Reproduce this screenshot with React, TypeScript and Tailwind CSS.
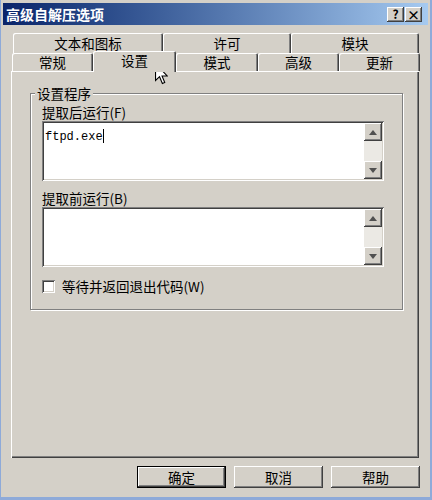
import React from "react";

const raised =
  "bg-[#d4d0c8] shadow-[inset_-1px_-1px_#404040,inset_1px_1px_#ffffff,inset_-2px_-2px_#808080,inset_2px_2px_#d4d0c8]";
const sunken =
  "shadow-[inset_1px_1px_#808080,inset_-1px_-1px_#ffffff,inset_2px_2px_#404040,inset_-2px_-2px_#d4d0c8]";

type Tab = { label: string; width: number; active?: boolean };

const backRow: Tab[] = [
  { label: "文本和图标", width: 150 },
  { label: "许可", width: 128 },
  { label: "模块", width: 128 },
];

const frontRow: Tab[] = [
  { label: "常规", width: 81 },
  { label: "设置", width: 83, active: true },
  { label: "模式", width: 82 },
  { label: "高级", width: 81 },
  { label: "更新", width: 81 },
];

function TabItem({ tab }: { tab: Tab }) {
  if (tab.active) {
    return (
      <div
        style={{ width: tab.width }}
        className="relative z-10 -mt-[2px] h-[21px] shrink-0 rounded-t-[2px] bg-[#d4d0c8] text-center leading-[19px] shadow-[inset_1px_1px_#ffffff,inset_-1px_0_#404040,inset_-2px_0_#808080]"
      >
        {tab.label}
      </div>
    );
  }
  return (
    <div
      style={{ width: tab.width }}
      className="flex h-full shrink-0 items-center justify-center rounded-t-[2px] bg-[#d4d0c8] pt-[1px] shadow-[inset_1px_1px_#ffffff,inset_-1px_0_#404040,inset_-2px_0_#808080]"
    >
      {tab.label}
    </div>
  );
}

function ArrowButton({ dir }: { dir: "up" | "down" }) {
  return (
    <div className={`flex h-[18px] w-[18px] items-center justify-center ${raised}`}>
      <svg width="8" height="5" viewBox="0 0 8 5">
        {dir === "up" ? (
          <path d="M4 0 L8 5 L0 5 Z" fill="#505050" />
        ) : (
          <path d="M0 0 L8 0 L4 5 Z" fill="#505050" />
        )}
      </svg>
    </div>
  );
}

function ScrollBox({ children }: { children?: React.ReactNode }) {
  return (
    <div className={`flex h-[60px] w-[342px] bg-white p-[2px] ${sunken}`}>
      <div className="min-w-0 flex-1 px-[1px] pt-[1px]">{children}</div>
      <div className="flex w-[18px] flex-col">
        <ArrowButton dir="up" />
        <div className="flex-1 bg-[#ebe9e4]" />
        <ArrowButton dir="down" />
      </div>
    </div>
  );
}

function DialogButton({ label, isDefault }: { label: string; isDefault?: boolean }) {
  return (
    <button
      className={`flex h-[22px] w-[89px] items-center justify-center bg-[#d4d0c8] pt-[1px] ${
        isDefault
          ? "shadow-[inset_0_0_0_1px_#000000,inset_-2px_-2px_#404040,inset_2px_2px_#ffffff,inset_-3px_-3px_#808080]"
          : "shadow-[inset_-1px_-1px_#404040,inset_1px_1px_#ffffff,inset_-2px_-2px_#808080,inset_2px_2px_#d4d0c8]"
      }`}
    >
      {label}
    </button>
  );
}

export default function App() {
  return (
    <div className="relative h-[500px] w-[432px] overflow-hidden border-b-[3px] border-l border-r-[2px] border-[#8eaad9] bg-[#d4d0c8] px-[2px] pt-[3px] font-['Noto_Sans_CJK_SC',sans-serif] text-[13.5px] text-black">
      {/* title bar */}
      <div className="flex h-[22px] items-center bg-linear-to-r from-[#0a246a] to-[#a6caf0] pl-[3px] pr-[6px]">
        <span className="text-[14px] font-bold text-white">高级自解压选项</span>
        <div className="ml-auto flex gap-[1px]">
          <div className={`flex h-[15px] w-[17px] items-center justify-center text-[12px] font-bold leading-none ${raised}`}>
            ?
          </div>
          <div className={`flex h-[15px] w-[17px] items-center justify-center text-[13px] font-bold leading-none ${raised}`}>
            ×
          </div>
        </div>
      </div>

      {/* tabs */}
      <div className="ml-[8px] mr-[9px] mt-[8px]">
        <div className="flex h-[20px] pl-[2px]">
          {backRow.map((t) => (
            <TabItem key={t.label} tab={t} />
          ))}
        </div>
        <div className="flex h-[18px] items-start pl-[1px]">
          {frontRow.map((t) => (
            <TabItem key={t.label} tab={t} />
          ))}
        </div>

        <div className="h-[387px] pt-[22px] pl-[19px] shadow-[inset_1px_1px_#ffffff,inset_-1px_-1px_#404040,inset_-2px_-2px_#808080]">
          <div className="relative h-[217px] w-[373px] border border-[#808080] pl-[11px] pt-[11px] shadow-[inset_1px_1px_#ffffff,1px_1px_#ffffff]">
            <span className="absolute -top-[8px] left-[4px] bg-[#d4d0c8] px-[2px] leading-[15px]">设置程序</span>

            <div className="leading-[15px]">提取后运行(F)</div>
            <div className="mt-[1px]">
              <ScrollBox>
                <span className="font-['Liberation_Mono',monospace] text-[12px] leading-[16px]">ftpd.exe</span>
                <span className="inline-block h-[14px] w-[1px] bg-black align-middle" />
              </ScrollBox>
            </div>

            <div className="mt-[10px] leading-[15px]">提取前运行(B)</div>
            <div className="mt-[1px]">
              <ScrollBox />
            </div>

            <label className="mt-[12px] flex items-center gap-[7px] leading-[15px]">
              <span className={`h-[13px] w-[13px] bg-white ${sunken}`} />
              <span>等待并返回退出代码(W)</span>
            </label>
          </div>
        </div>
      </div>

      {/* buttons */}
      <div className="mt-[8px] flex justify-end gap-[8px] pr-[8px]">
        <DialogButton label="确定" isDefault />
        <DialogButton label="取消" />
        <DialogButton label="帮助" />
      </div>

      {/* mouse pointer */}
      <svg className="absolute left-[154px] top-[63px]" width="13" height="22" viewBox="0 0 12 20">
        <path
          d="M0.5 0.5 L0.5 16 L4.2 12.5 L6.8 18.8 L9 17.8 L6.5 11.8 L11.2 11.8 Z"
          fill="#ffffff"
          stroke="#000000"
          strokeWidth="1"
          strokeLinejoin="miter"
        />
      </svg>
    </div>
  );
}
